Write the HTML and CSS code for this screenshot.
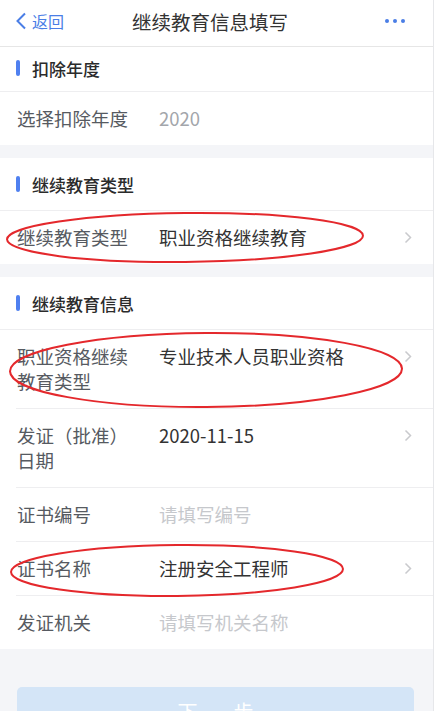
FILE: index.html
```html
<!DOCTYPE html>
<html lang="zh-CN">
<head>
    <meta charset="UTF-8">
    <meta name="viewport" content="width=device-width, initial-scale=1.0">
    <title>继续教育信息填写</title>
    <link rel="stylesheet" href="styles.css">
</head>
<body>
<div class="page">
    <header class="nav">
        <div class="back">
            <svg width="12" height="18" viewBox="0 0 12 18"><polyline points="10,1.5 2.5,9 10,16.5" fill="none" stroke="#4a7ee6" stroke-width="2"/></svg>
            <span>返回</span>
        </div>
        <h1 class="title">继续教育信息填写</h1>
        <div class="more"><i></i><i></i><i></i></div>
    </header>

    <section class="card">
        <h3 class="sec-title first">扣除年度</h3>
        <div class="row">
            <div class="label">选择扣除年度</div>
            <div class="value muted">2020</div>
        </div>
    </section>

    <section class="card">
        <h3 class="sec-title">继续教育类型</h3>
        <div class="row">
            <div class="label">继续教育类型</div>
            <div class="value">职业资格继续教育</div>
            <svg class="arrow" width="8" height="13" viewBox="0 0 8 13"><polyline points="1.5,1.5 6.5,6.5 1.5,11.5" fill="none" stroke="#c9cacd" stroke-width="1.5"/></svg>
        </div>
    </section>

    <section class="card">
        <h3 class="sec-title">继续教育信息</h3>
        <div class="row">
            <div class="label">职业资格继续教育类型</div>
            <div class="value">专业技术人员职业资格</div>
            <svg class="arrow" width="8" height="13" viewBox="0 0 8 13"><polyline points="1.5,1.5 6.5,6.5 1.5,11.5" fill="none" stroke="#c9cacd" stroke-width="1.5"/></svg>
        </div>
        <div class="row sub">
            <div class="label">发证（批准）日期</div>
            <div class="value">2020-11-15</div>
            <svg class="arrow" width="8" height="13" viewBox="0 0 8 13"><polyline points="1.5,1.5 6.5,6.5 1.5,11.5" fill="none" stroke="#c9cacd" stroke-width="1.5"/></svg>
        </div>
        <div class="row sub">
            <div class="label">证书编号</div>
            <div class="value hint">请填写编号</div>
        </div>
        <div class="row sub">
            <div class="label">证书名称</div>
            <div class="value">注册安全工程师</div>
            <svg class="arrow" width="8" height="13" viewBox="0 0 8 13"><polyline points="1.5,1.5 6.5,6.5 1.5,11.5" fill="none" stroke="#c9cacd" stroke-width="1.5"/></svg>
        </div>
        <div class="row sub">
            <div class="label">发证机关</div>
            <div class="value hint">请填写机关名称</div>
        </div>
    </section>

    <div class="footer">
        <button class="next">下一步</button>
    </div>

    <!-- red marks drawn over the screenshot -->
    <svg class="marks" width="434" height="711" viewBox="0 0 434 711">
        <ellipse cx="185" cy="237.5" rx="178" ry="24.5" transform="rotate(-0.6 185 237.5)"/>
        <ellipse cx="206" cy="370" rx="196" ry="37" transform="rotate(-0.4 206 370)"/>
        <ellipse cx="177" cy="570.5" rx="166" ry="25.5" transform="rotate(-0.5 177 570.5)"/>
    </svg>
</div>
</body>
</html>
```

FILE: styles.css
```css
*{
    box-sizing: border-box;
    margin: 0;
    padding: 0;
}
body{
    background: #f4f5f8;
    font-family: "Noto Sans CJK SC", "Noto Sans", sans-serif;
    color: #333;
    overflow: hidden;
}
.page{
    position: relative;
    min-height: 711px;
    border-right: 1px solid #e6e7ea;
}
.nav{
    height: 47px;
    background: #fff;
    border-bottom: 1px solid #e6e6e6;
    display: flex;
    align-items: center;
    justify-content: space-between;
    padding: 0 28px 4px 15px;
}
.back{
    display: flex;
    align-items: center;
    gap: 5px;
    color: #4a7ee6;
    font-size: 16px;
    width: 80px;
}
.title{
    font-size: 19.5px;
    font-weight: normal;
    color: #333;
}
.more{
    width: 80px;
    display: flex;
    justify-content: flex-end;
    gap: 4px;
}
.more i{
    width: 4px;
    height: 4px;
    border-radius: 50%;
    background: #4a7ee6;
}
.card{
    background: #fff;
    margin-bottom: 13px;
}
.sec-title{
    height: 53px;
    display: flex;
    align-items: center;
    padding-left: 16px;
    font-size: 17px;
    font-weight: 500;
    color: #2b2b2b;
    border-bottom: 1px solid #eeeef0;
}
.sec-title::before{
    content: "";
    width: 4px;
    height: 16px;
    border-radius: 2px;
    background: #4f80f0;
    margin-right: 12px;
}
.sec-title.first{
    height: 45px;
    padding-bottom: 2px;
}
.row{
    display: flex;
    align-items: flex-start;
    padding: 14px 21px 14px 17px;
    font-size: 18.5px;
    line-height: 25px;
}
.row.sub{
    border-top: 1px solid #eeeef0;
    margin-left: 16px;
    padding-left: 1px;
}
.label{
    width: 116px;
    color: #565a61;
    margin-right: 26px;
}
.value{
    flex: 1;
    color: #333;
}
.value.muted{
    color: #a3a6ab;
}
.value.hint{
    color: #c6c8cc;
}
.arrow{
    margin-top: 6px;
}
.footer{
    padding: 25px 19px 0 17px;
}
.next{
    width: 100%;
    height: 48px;
    border: none;
    border-radius: 5px;
    background: #d4e5f7;
    color: #fff;
    font-family: "Noto Sans CJK SC", sans-serif;
    font-size: 20px;
    letter-spacing: 8px;
    text-indent: 8px;
}
.marks{
    position: absolute;
    top: 0;
    left: 0;
    pointer-events: none;
}
.marks ellipse{
    fill: none;
    stroke: #e4282c;
    stroke-width: 2;
}
```
